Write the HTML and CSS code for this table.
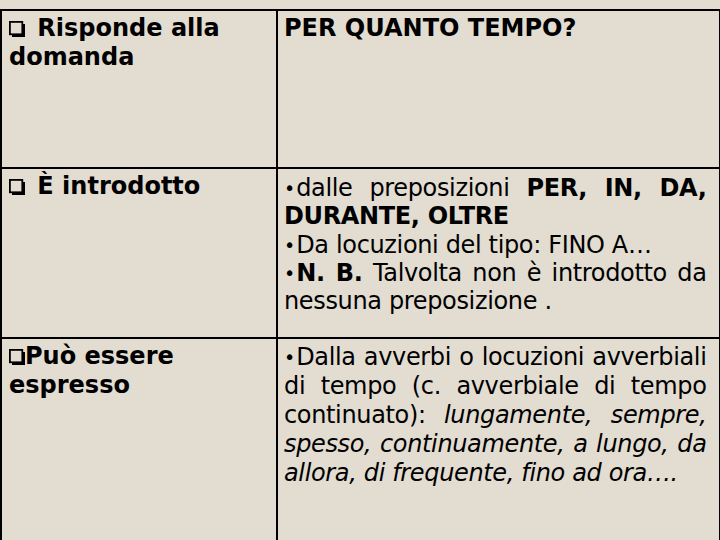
FILE: index.html
```html
<!DOCTYPE html>
<html lang="it">
<head>
<meta charset="utf-8">
<title>Complemento di tempo continuato</title>
<link rel="stylesheet" href="styles.css">
</head>
<body>
<table class="sheet">
  <colgroup>
    <col class="col-label">
    <col class="col-body">
  </colgroup>
  <tr class="row row-1">
    <td class="label"><svg class="box" viewBox="0 0 20 16" aria-hidden="true"><rect x="0.9" y="0.9" width="12.4" height="12.4" fill="none" stroke="#000" stroke-width="1.8"/><path d="M3 14.8 H14.8 V3" fill="none" stroke="#000" stroke-width="2.4"/></svg> Risponde alla domanda</td>
    <td class="body"><p class="head">PER QUANTO TEMPO?</p></td>
  </tr>
  <tr class="row row-2">
    <td class="label"><svg class="box" viewBox="0 0 20 16" aria-hidden="true"><rect x="0.9" y="0.9" width="12.4" height="12.4" fill="none" stroke="#000" stroke-width="1.8"/><path d="M3 14.8 H14.8 V3" fill="none" stroke="#000" stroke-width="2.4"/></svg> È introdotto</td>
    <td class="body">
      <p class="item"><span class="dot">•</span>dalle preposizioni <b>PER, IN, DA, DURANTE, OLTRE</b></p>
      <p class="item"><span class="dot">•</span>Da locuzioni del tipo: FINO A…</p>
      <p class="item"><span class="dot">•</span><b>N. B.</b> Talvolta non è introdotto da nessuna preposizione .</p>
    </td>
  </tr>
  <tr class="row row-3">
    <td class="label"><svg class="box box-tight" viewBox="0 0 16 16" aria-hidden="true"><rect x="0.9" y="0.9" width="12.4" height="12.4" fill="none" stroke="#000" stroke-width="1.8"/><path d="M3 14.8 H14.8 V3" fill="none" stroke="#000" stroke-width="2.4"/></svg>Può essere espresso</td>
    <td class="body">
      <p class="item loose"><span class="dot">•</span>Dalla avverbi o locuzioni avverbiali di tempo (c. avverbiale di tempo continuato): <i>lungamente, sempre, spesso, continuamente, a lungo, da allora, di frequente, fino ad ora….</i></p>
    </td>
  </tr>
</table>
</body>
</html>
```

FILE: styles.css
```css
html, body {
  margin: 0;
  padding: 0;
  background: #e2dcd1;
}

body {
  padding-top: 9px;
  font-family: "DejaVu Sans", Verdana, sans-serif;
  font-size: 24px;
  color: #000;
}

.sheet {
  border-collapse: collapse;
  width: 718px;
  table-layout: fixed;
  border-top: 2px solid #000;
  border-left: 2px solid #000;
  border-right: 1px solid #000;
}

.col-label { width: 276px; }
.col-body { width: 442px; }

.sheet td {
  vertical-align: top;
  border-top: 2px solid #000;
}

.row-1 { height: 158px; }
.row-2 { height: 170px; }
.row-3 { height: 204px; }

.label {
  border-right: 2px solid #000;
  padding: 3px 6px 0 7px;
  font-weight: bold;
  line-height: 29px;
}

.body {
  padding: 3px 12px 0 6px;
}

.box {
  width: 20px;
  height: 16px;
  vertical-align: -1px;
}

.box-tight {
  width: 16px;
}

.head {
  margin: 0;
  font-weight: bold;
  line-height: 29px;
}

.item {
  margin: 0;
  text-align: justify;
  line-height: 28.3px;
  letter-spacing: -0.35px;
}

.dot {
  font-size: 19px;
  font-weight: normal;
  font-style: normal;
  letter-spacing: 0;
  vertical-align: 1px;
  margin-right: 1px;
}

.row-2 .body { padding-top: 5px; }

.row-3 .body { padding-top: 4px; }

.item.loose {
  line-height: 29px;
}
```
